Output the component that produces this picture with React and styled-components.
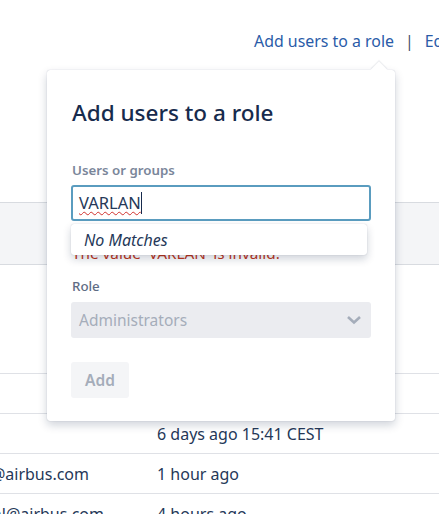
import React from 'react'
import styled, { createGlobalStyle } from 'styled-components'

const GlobalStyle = createGlobalStyle`
  html, body {
    margin: 0;
    height: 100%;
    overflow: hidden;
    background: #fff;
  }
  body {
    font-family: "Noto Sans", "Open Sans", sans-serif;
    color: #172b4d;
  }
`

const rows = [
  { email: '', seen: '6 days ago 15:41 CEST' },
  { email: '@airbus.com', seen: '1 hour ago', trim: 68 },
  { email: 'al@airbus.com', seen: '4 hours ago', trim: 53 }
]

function App() {
  return (
    <Page>
      <GlobalStyle />
      <Toolbar>
        <ToolLink>Add users to a role</ToolLink>
        <Pipe>|</Pipe>
        <ToolLink>Edit</ToolLink>
      </Toolbar>

      <TableHead />
      <TallRow />
      <Row />
      {rows.map((row) => (
        <Row key={row.seen}>
          <Email $trim={row.trim}>{row.email}</Email>
          <Seen>{row.seen}</Seen>
        </Row>
      ))}

      <Popover>
        <Title>Add users to a role</Title>
        <FieldLabel>Users or groups</FieldLabel>
        <SearchBox>
          <Typed>VARLAN</Typed>
        </SearchBox>
        <ErrorText>The value 'VARLAN' is invalid.</ErrorText>
        <NoMatches>No Matches</NoMatches>
        <FieldLabel $role>Role</FieldLabel>
        <RoleSelect>
          Administrators
          <svg width="16" height="10" viewBox="0 0 16 10" fill="none">
            <path d="M2 2l6 5.5L14 2" stroke="#a5adba" strokeWidth="2.6" />
          </svg>
        </RoleSelect>
        <AddButton disabled>Add</AddButton>
      </Popover>
    </Page>
  )
}

const Page = styled.div`
  position: relative;
  width: 439px;
  height: 514px;
  overflow: hidden;
`

const Toolbar = styled.div`
  display: flex;
  align-items: center;
  height: 202px;
  padding: 0 0 120px 254px;
  box-sizing: border-box;
  white-space: nowrap;
  font-size: 15.9px;
`

const ToolLink = styled.a`
  color: #2a5ba8;
`

const Pipe = styled.span`
  margin: 0 11px;
  color: #42526e;
`

const TableHead = styled.div`
  height: 61px;
  background: #f4f5f7;
  border-top: 1px solid #d8dbe0;
  border-bottom: 1px solid #d8dbe0;
`

const TallRow = styled.div`
  height: 108px;
  border-bottom: 1px solid #dfe1e6;
`

const Row = styled.div`
  display: flex;
  align-items: center;
  height: 39px;
  border-bottom: 1px solid #dfe1e6;
  font-size: 16px;
  color: #253858;
  white-space: nowrap;
`

const Email = styled.div`
  display: flex;
  justify-content: flex-end;
  flex: 0 0 157px;
  min-width: 0;
  box-sizing: border-box;
  padding-right: ${(p) => p.$trim || 0}px;
`

const Seen = styled.div`
  flex: 1;
`

const Popover = styled.div`
  position: absolute;
  left: 47px;
  top: 70px;
  width: 348px;
  height: 351px;
  box-sizing: border-box;
  padding: 27px 24px 0;
  background: #fff;
  border-radius: 3px;
  box-shadow: 0 4px 10px rgba(9, 30, 66, 0.2), 0 0 1px rgba(9, 30, 66, 0.3);

  &::before {
    content: '';
    position: absolute;
    top: -6px;
    left: 326px;
    width: 12px;
    height: 12px;
    background: #fff;
    transform: rotate(45deg);
    box-shadow: -1px -1px 1px rgba(9, 30, 66, 0.08);
  }
`

const Title = styled.h2`
  margin: 0 0 0 1px;
  font-size: 22.5px;
  line-height: 32px;
  font-weight: 500;
  color: #172b4d;
`

const FieldLabel = styled.label`
  display: block;
  margin: ${(p) => (p.$role ? '0' : '32px')} 0 0 1px;
  font-size: 13.3px;
  line-height: 18px;
  font-weight: ${(p) => (p.$role ? 500 : 600)};
  color: ${(p) => (p.$role ? '#5e6c84' : '#7a869a')};
`

const SearchBox = styled.div`
  display: flex;
  align-items: center;
  height: 36px;
  margin-top: 6px;
  padding: 0 6px;
  box-sizing: border-box;
  border: 2px solid #5a9cbf;
  border-radius: 3px;
  font-size: 16.5px;
  color: #253858;
`

const Typed = styled.span`
  border-right: 1px solid #172b4d;
  line-height: 22px;
  text-decoration: underline wavy #d0312d 1px;
  text-underline-offset: 2px;
`

const ErrorText = styled.div`
  margin: 22px 0 0 1px;
  height: 34px;
  font-size: 15.3px;
  line-height: 20px;
  color: #c0351a;
`

const NoMatches = styled.div`
  position: absolute;
  left: 24px;
  top: 154px;
  width: 296px;
  height: 31px;
  box-sizing: border-box;
  padding-left: 13px;
  line-height: 32px;
  font-size: 16px;
  font-style: italic;
  color: #253858;
  background: #fff;
  border-radius: 3px;
  box-shadow: 0 4px 8px rgba(9, 30, 66, 0.2), 0 0 1px rgba(9, 30, 66, 0.25);
`

const RoleSelect = styled.div`
  display: flex;
  align-items: center;
  justify-content: space-between;
  height: 36px;
  margin-top: 7px;
  padding: 0 9px 0 8px;
  box-sizing: border-box;
  background: #ebecf0;
  border-radius: 3px;
  font-size: 15.5px;
  color: #a5adba;
`

const AddButton = styled.button`
  display: block;
  width: 58px;
  height: 36px;
  margin-top: 24px;
  padding: 0;
  border: 0;
  border-radius: 3px;
  background: #f4f5f7;
  font-family: inherit;
  font-size: 15.5px;
  font-weight: 600;
  color: #a5adba;
`

export default App
